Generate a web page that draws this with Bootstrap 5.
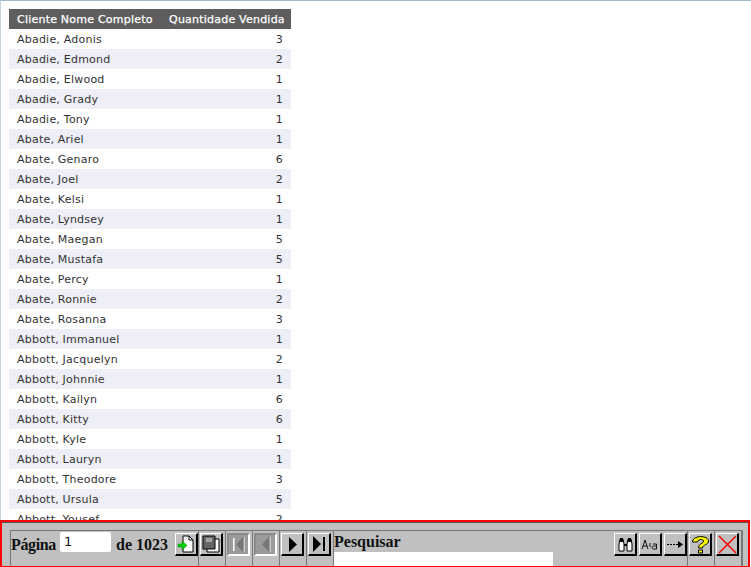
<!DOCTYPE html>
<html lang="pt">
<head>
<meta charset="utf-8">
<title>Relatório</title>
<link href="https://cdn.jsdelivr.net/npm/bootstrap@5.3.0/dist/css/bootstrap.min.css" rel="stylesheet">
<style>
html,body{height:100%;overflow:hidden;background:#fff}
.shell{height:567px;width:751px;border-top:1px solid #a3b8d0;border-left:1px solid #c5d2e0}
.report{flex:1 1 0;min-height:0;overflow:hidden;padding:8px 0 0 8px}
.sales{width:282px;margin:0;border-collapse:collapse;font:11px/19px "DejaVu Sans",sans-serif;color:#333;table-layout:fixed;letter-spacing:.02em}
.sales th{background:#5e5e5e;color:#fff;font-weight:400;height:20px;padding:1px 8px 0;white-space:nowrap;border:0;-webkit-text-stroke:.25px #fff}
.sales td{height:20px;padding:1px 8px 0;border:0;background:#fff}
.sales tbody tr:nth-child(even) td{background:#eeeef6}
.sales .num{text-align:right}
.tools{flex:0 0 47px;margin:0 1px 0 -1px;border:2px solid #f00;border-bottom-width:1px;background:#c0c0c0;padding:8px 5px 0 8px;position:relative;overflow:hidden}
.tools::before{content:"";position:absolute;left:0;right:0;top:0;height:1px;background:#555}
.strip{height:40px;border-top:1px solid #777;border-left:1px solid #777;border-right:1px solid #777;font:700 16px/1 "Liberation Serif",serif;color:#111}
.slot{border-right:1px solid #777;padding:2px 0 0 1px;flex:0 0 auto;width:27px}
.pagecell{width:188px;border-right:1px solid #777;flex:0 0 auto;padding:2px 0 0 0;height:40px}
.pagelabel{padding-top:4px;white-space:nowrap}
.pagelabel.tight{letter-spacing:-.35px}
.pageinput{width:51px;height:20px;background:#fff;border:0;font:13px/20px "DejaVu Sans",sans-serif;padding:0 4px;color:#111;margin:-1px 5px 0 4px;border-radius:2px}
.findcell{flex:1 1 auto;padding:2px 0 0 0;min-width:0;border-right:1px solid #777;height:40px}
.findlabel{line-height:18px;height:19px}
.findinput{width:219px;height:16px;background:#fff;border:0;display:block;padding:0}
.bev{display:inline-flex;align-items:center;justify-content:center;width:23px;height:23px;background:#c0c0c0;padding:0;border-style:solid;border-width:1px 2px 2px 1px;border-color:#fff #000 #000 #fff;margin:0}
.bev.off{background:#9a9a9a;border-color:#8b8b8b #fff #fff #8b8b8b;border-width:2px}
.bev svg{display:block}
.bev2{margin-left:2px}
</style>
</head>
<body>
<div class="shell d-flex flex-column">
  <div class="report">
    <table class="sales">
      <thead><tr><th style="width:152px">Cliente Nome Completo</th><th class="num">Quantidade Vendida</th></tr></thead>
      <tbody>
<tr><td>Abadie, Adonis</td><td class="num">3</td></tr>
<tr><td>Abadie, Edmond</td><td class="num">2</td></tr>
<tr><td>Abadie, Elwood</td><td class="num">1</td></tr>
<tr><td>Abadie, Grady</td><td class="num">1</td></tr>
<tr><td>Abadie, Tony</td><td class="num">1</td></tr>
<tr><td>Abate, Ariel</td><td class="num">1</td></tr>
<tr><td>Abate, Genaro</td><td class="num">6</td></tr>
<tr><td>Abate, Joel</td><td class="num">2</td></tr>
<tr><td>Abate, Kelsi</td><td class="num">1</td></tr>
<tr><td>Abate, Lyndsey</td><td class="num">1</td></tr>
<tr><td>Abate, Maegan</td><td class="num">5</td></tr>
<tr><td>Abate, Mustafa</td><td class="num">5</td></tr>
<tr><td>Abate, Percy</td><td class="num">1</td></tr>
<tr><td>Abate, Ronnie</td><td class="num">2</td></tr>
<tr><td>Abate, Rosanna</td><td class="num">3</td></tr>
<tr><td>Abbott, Immanuel</td><td class="num">1</td></tr>
<tr><td>Abbott, Jacquelyn</td><td class="num">2</td></tr>
<tr><td>Abbott, Johnnie</td><td class="num">1</td></tr>
<tr><td>Abbott, Kailyn</td><td class="num">6</td></tr>
<tr><td>Abbott, Kitty</td><td class="num">6</td></tr>
<tr><td>Abbott, Kyle</td><td class="num">1</td></tr>
<tr><td>Abbott, Lauryn</td><td class="num">1</td></tr>
<tr><td>Abbott, Theodore</td><td class="num">3</td></tr>
<tr><td>Abbott, Ursula</td><td class="num">5</td></tr>
<tr><td>Abbott, Yousef</td><td class="num">2</td></tr>
      </tbody>
    </table>
  </div>
  <div class="tools">
    <div class="strip d-flex">
      <div class="pagecell d-flex align-items-start">
        <span class="pagelabel tight">Página</span><input class="pageinput" value="1" aria-label="Página"><span class="pagelabel">de 1023</span>
        <button class="bev ms-auto" aria-label="Ir"><svg width="18" height="18" viewBox="0 0 18 18"><path d="M6 1h6l4 4v12H6z" fill="#fff" stroke="#000"/><path d="M12 1v4h4" fill="none" stroke="#000"/><path d="M1 9h4V6l5 4.500L5 15v-3H1z" fill="#00d000" stroke="#008000" stroke-width=".5"/></svg></button>
      </div>
      <div class="slot"><button class="bev" aria-label="Imprimir"><svg width="18" height="18" viewBox="0 0 18 18"><path d="M5 4h12v13H5z" fill="#fff" stroke="#000"/><path d="M1 1h12v13H1z" fill="#666" stroke="#000"/><path d="M4 4h6M4 6h6" stroke="#ddd"/></svg></button></div>
      <div class="slot"><button class="bev off" disabled aria-label="Primeira"><svg width="17" height="17" viewBox="0 0 17 17"><path d="M3 2h1.500v13H3z" fill="#fff"/><path d="M13 1v15L6 8.500z" fill="#777"/><path d="M14 1h1v15h-1z" fill="#ccc"/></svg></button></div>
      <div class="slot"><button class="bev off" disabled aria-label="Anterior"><svg width="17" height="17" viewBox="0 0 17 17"><path d="M12 1v15L5 8.500z" fill="#777"/><path d="M13 1h1v15h-1z" fill="#ccc"/></svg></button></div>
      <div class="slot"><button class="bev" aria-label="Próxima"><svg width="17" height="17" viewBox="0 0 17 17"><path d="M5 1v15l8-7.500z" fill="#000"/></svg></button></div>
      <div class="slot"><button class="bev" aria-label="Última"><svg width="18" height="18" viewBox="0 0 18 18"><path d="M3 1v16l8-8z" fill="#000"/><path d="M13 2h2v14h-2z" fill="#000"/></svg></button></div>
      <div class="findcell d-flex">
        <div>
          <div class="findlabel">Pesquisar</div>
          <input class="findinput" aria-label="Pesquisar">
        </div>
        <div class="ms-auto d-flex">
          <button class="bev" aria-label="Buscar"><svg width="17" height="17" viewBox="0 0 17 17"><path d="M2 8l1-5h3l1 5v7H2zM10 8l1-5h3l1 5v7h-5z" fill="#fff" stroke="#000"/><path d="M3 2h3v4H3zM11 2h3v4h-3zM7 8h3v2H7z" fill="#000"/></svg></button>
          <button class="bev bev2" aria-label="Diferenciar"><svg width="18" height="15" viewBox="0 0 18 15"><path d="M1 12l3-9 3 9M2 9h4M8 7h2M8 9h2M12 7h3.500v5H12.500 a1.500 1.500 0 0 1 0-3h3" fill="none" stroke="#111" stroke-width="1"/></svg></button>
          <button class="bev bev2" aria-label="Avançar"><svg width="18" height="11" viewBox="0 0 18 11"><path d="M1 5.500h11" stroke="#000" stroke-dasharray="2 1"/><path d="M12 2l5 3.500-5 3.500z" fill="#000"/></svg></button>
        </div>
      </div>
      <div class="slot"><button class="bev" aria-label="Ajuda"><svg width="19" height="19" viewBox="0 0 19 19"><path d="M1.500 7C1.500 0 17.500 0 17.500 6c0 4-6 3.500-6 7H7.500c0-5 5-4 5-7 0-2-6-2-6 1z" fill="#ff0" stroke="#000"/><path d="M7.500 15h4v3h-4z" fill="#ff0" stroke="#000"/></svg></button></div>
      <div class="slot"><button class="bev" aria-label="Fechar"><svg width="19" height="19" viewBox="0 0 19 19"><path d="M1 1l17 17M18 1L1 18" stroke="#f00" stroke-width="1.500"/></svg></button></div>
    </div>
  </div>
</div>
</body>
</html>
